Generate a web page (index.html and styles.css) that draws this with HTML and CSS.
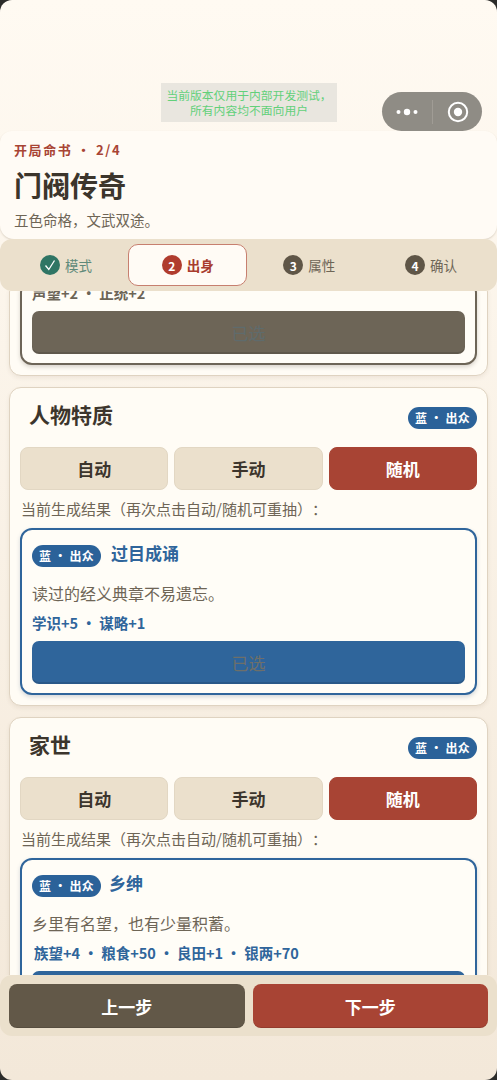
FILE: index.html
```html
<!DOCTYPE html>
<html lang="zh-CN">
<head>
    <meta charset="UTF-8">
    <meta name="viewport" content="width=device-width, initial-scale=1.0">
    <title>门阀传奇</title>
    <link rel="stylesheet" href="styles.css">
</head>
<body>
    <div class="app">
        <div class="dev-notice">当前版本仅用于内部开发测试，<br>所有内容均不面向用户</div>
        <div class="capsule">
            <svg class="capsule-dots" width="24" height="8" viewBox="0 0 24 8"><circle cx="3.5" cy="4" r="2" fill="#fff"/><circle cx="12" cy="4" r="3.2" fill="#fff"/><circle cx="20.5" cy="4" r="2" fill="#fff"/></svg>
            <span class="capsule-line"></span>
            <svg class="capsule-target" width="22" height="22" viewBox="0 0 22 22"><circle cx="11" cy="11" r="9.2" fill="none" stroke="#fff" stroke-width="2"/><circle cx="11" cy="11" r="4.2" fill="#fff"/></svg>
        </div>

        <header class="head">
            <p class="eyebrow">开局命书 · 2/4</p>
            <h1>门阀传奇</h1>
            <p class="sub">五色命格，文武双途。</p>
        </header>

        <nav class="steps">
            <div class="step step-done">
                <span class="dot"><svg width="14" height="14" viewBox="0 0 14 14"><path d="M2.5 7.5 L5.8 11.5 L11.5 2.5" fill="none" stroke="#fff" stroke-width="1.3"/></svg></span>模式
            </div>
            <div class="step step-now"><span class="dot">2</span>出身</div>
            <div class="step"><span class="dot">3</span>属性</div>
            <div class="step"><span class="dot">4</span>确认</div>
        </nav>

        <main class="scroll">
            <section class="card card-first">
                <div class="pick pick-grey">
                    <p class="stats">声望+2 · 正统+2</p>
                    <button class="picked">已选</button>
                </div>
            </section>

            <section class="card">
                <div class="card-top">
                    <h2>人物特质</h2>
                    <span class="badge">蓝 · 出众</span>
                </div>
                <div class="modes">
                    <button>自动</button>
                    <button>手动</button>
                    <button class="on">随机</button>
                </div>
                <p class="hint">当前生成结果（再次点击自动/随机可重抽）：</p>
                <div class="pick">
                    <div class="pick-top">
                        <span class="badge">蓝 · 出众</span>
                        <span class="name">过目成诵</span>
                    </div>
                    <p class="desc">读过的经义典章不易遗忘。</p>
                    <p class="stats">学识+5 · 谋略+1</p>
                    <button class="picked">已选</button>
                </div>
            </section>

            <section class="card">
                <div class="card-top">
                    <h2>家世</h2>
                    <span class="badge">蓝 · 出众</span>
                </div>
                <div class="modes">
                    <button>自动</button>
                    <button>手动</button>
                    <button class="on">随机</button>
                </div>
                <p class="hint">当前生成结果（再次点击自动/随机可重抽）：</p>
                <div class="pick">
                    <div class="pick-top">
                        <span class="badge">蓝 · 出众</span>
                        <span class="name name-tight">乡绅</span>
                    </div>
                    <p class="desc">乡里有名望，也有少量积蓄。</p>
                    <p class="stats stats-in">族望+4 · 粮食+50 · 良田+1 · 银两+70</p>
                    <button class="picked">已选</button>
                </div>
            </section>
        </main>

        <footer class="foot">
            <button class="prev">上一步</button>
            <button class="next">下一步</button>
        </footer>
    </div>
</body>
</html>
```

FILE: styles.css
```css
* { margin: 0; padding: 0; box-sizing: border-box; }
html, body { height: 100%; background: #2c2c2a; }
body {
    font-family: "Noto Sans CJK SC", "Noto Sans", sans-serif;
    color: #3c352c;
    overflow: hidden;
    text-spacing-trim: space-all;
}
button {
    font-family: inherit;
    border: none;
}
.app {
    position: relative;
    display: flex;
    flex-direction: column;
    width: 497px;
    height: 1080px;
    padding-top: 131px;
    padding-bottom: 44px;
    border-radius: 12px;
    overflow: hidden;
    background: linear-gradient(180deg, #fffaf2 0%, #f3e8d9 100%);
}

/* overlays from the host app */
.dev-notice {
    position: absolute;
    top: 83px;
    left: 161px;
    width: 176px;
    height: 39px;
    padding-top: 5px;
    background: #e9e6df;
    color: #62d07a;
    font-size: 11.8px;
    line-height: 14.5px;
    text-align: center;
    white-space: nowrap;
    z-index: 3;
}
.capsule {
    position: absolute;
    top: 92px;
    left: 382px;
    width: 100px;
    height: 39px;
    display: flex;
    align-items: center;
    border-radius: 20px;
    background: #8f8c85;
    z-index: 3;
}
.capsule-dots { margin-left: 13px; }
.capsule-line {
    width: 1px;
    height: 24px;
    margin-left: 13px;
    background: #a09c95;
}
.capsule-target { margin-left: 14px; }

/* title block */
.head {
    height: 108px;
    padding: 9px 14px 0;
    background: #fffbf5;
    border-radius: 12px 12px 14px 14px;
    box-shadow: 0 1px 2px rgba(90, 70, 40, 0.2);
}
.eyebrow {
    color: #a84434;
    font-size: 13px;
    line-height: 19px;
    font-weight: 700;
    letter-spacing: 1.6px;
}
h1 {
    margin-top: 7px;
    font-size: 28px;
    line-height: 38px;
    font-weight: 700;
}
.sub {
    margin-top: 5px;
    color: #6e6556;
    font-size: 14.5px;
    line-height: 22px;
}

/* step bar */
.steps {
    position: relative;
    z-index: 2;
    display: grid;
    grid-template-columns: repeat(4, 1fr);
    gap: 2.5px;
    align-items: center;
    height: 52px;
    padding: 0 6.5px;
    background: #ebe0cc;
    border-radius: 12px;
}
.step {
    display: flex;
    align-items: center;
    justify-content: center;
    height: 42px;
    gap: 5px;
    color: #6e6556;
    font-size: 13.5px;
}
.dot {
    display: flex;
    align-items: center;
    justify-content: center;
    width: 20px;
    height: 20px;
    border-radius: 50%;
    background: #5f5647;
    color: #fff;
    font-size: 12px;
    font-weight: 700;
}
.step-done { color: #5f8a7a; }
.step-done .dot { background: #2f7564; }
.step-now {
    background: #fffbf5;
    border: 1px solid #c77f6f;
    border-radius: 10px;
    color: #a83c2e;
    font-weight: 700;
}
.step-now .dot { background: #b03c2e; }

/* scrolled content */
.scroll {
    flex: 1;
    min-height: 0;
    overflow: hidden;
    padding: 0 9px;
}
.card {
    margin-bottom: 11px;
    padding: 9px 10px 10px;
    background: #fffcf5;
    border: 1px solid #dfd3c1;
    border-radius: 12px;
    box-shadow: 0 2px 4px rgba(90, 70, 40, 0.08);
}
.card-first {
    margin-top: -11px;
    padding-top: 0;
}
.card-top {
    display: flex;
    justify-content: space-between;
    align-items: center;
    height: 40px;
    padding-left: 9px;
    padding-top: 2px;
}
h2 {
    margin-bottom: 8px;
    font-size: 21px;
    line-height: 28px;
    font-weight: 700;
}
.badge {
    display: inline-block;
    flex-shrink: 0;
    width: 69px;
    height: 22px;
    border-radius: 11px;
    background: #2b6299;
    color: #fff;
    font-size: 12px;
    line-height: 22px;
    font-weight: 700;
    letter-spacing: 0.3px;
    text-align: center;
    white-space: pre;
}
.modes {
    display: grid;
    grid-template-columns: repeat(3, 1fr);
    gap: 6px;
    margin-top: 10px;
}
.modes button {
    height: 43px;
    background: #ebe0cc;
    border: 1px solid #e2d7c3;
    border-radius: 8px;
    color: #3c352c;
    font-size: 17px;
    font-weight: 700;
}
.modes .on {
    background: #a84434;
    border-color: #a84434;
    color: #fff;
}
.hint {
    margin-top: 8px;
    padding-left: 1px;
    color: #6e6556;
    font-size: 15px;
    line-height: 22px;
}
.pick {
    margin-top: 8px;
    padding: 15px 10px 9px;
    background: #fffdf7;
    border: 2px solid #2f659b;
    border-radius: 12px;
    box-shadow: 0 2px 4px rgba(40, 70, 110, 0.2);
}
.pick-grey {
    margin-top: 0;
    padding-top: 0;
    border-color: #6d6557;
    box-shadow: 0 2px 4px rgba(60, 50, 40, 0.2);
}
.pick-top {
    display: flex;
    gap: 10px;
    height: 22px;
}
.name {
    color: #2f659b;
    font-size: 17px;
    line-height: 16px;
    font-weight: 700;
}
.name-tight { margin-left: -2px; }
.desc {
    margin-top: 15px;
    color: #6e6556;
    font-size: 16px;
    line-height: 22px;
}
.stats {
    margin-top: 9px;
    color: #2f659b;
    font-size: 14.5px;
    line-height: 20px;
    font-weight: 700;
}
.stats-in { padding-left: 2px; }
.pick-grey .stats {
    margin-top: 0;
    color: #6d6557;
}
.picked {
    display: block;
    width: 100%;
    height: 43px;
    margin-top: 8px;
    border-radius: 7px;
    background: #2f659b;
    box-shadow: inset 0 -2px 0 rgba(0, 0, 0, 0.12);
    color: #6d6f6a;
    font-size: 17px;
}
.pick-grey .picked {
    background: #6d6557;
    color: #5f6b6c;
}

/* bottom bar */
.foot {
    position: relative;
    z-index: 2;
    display: grid;
    grid-template-columns: 1fr 1fr;
    gap: 8px;
    height: 61px;
    padding: 9px 9px 0;
    background: #ebe0cc;
    border-radius: 12px;
}
.foot button {
    height: 44px;
    border-radius: 8px;
    box-shadow: inset 0 -1px 0 rgba(0, 0, 0, 0.12);
    color: #fff;
    font-size: 17px;
    font-weight: 700;
}
.prev { background: #625848; }
.next { background: #a84434; }
```
